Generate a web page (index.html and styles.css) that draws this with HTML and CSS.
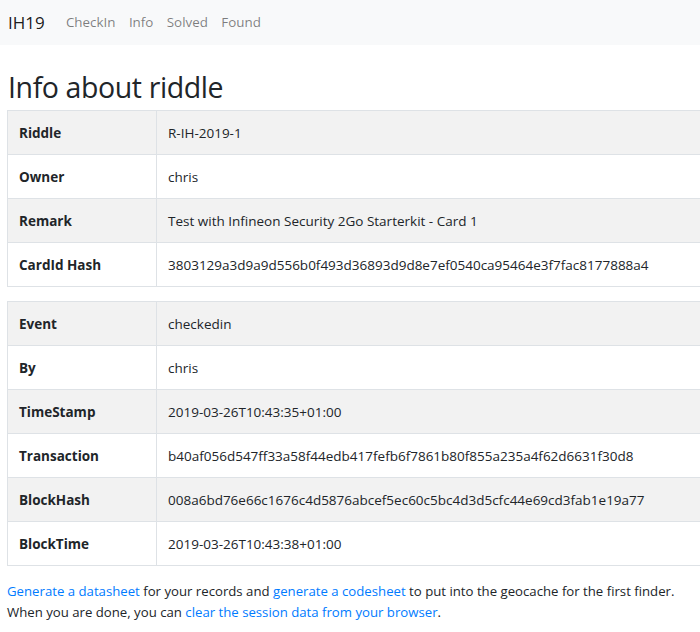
FILE: index.html
```html
<!DOCTYPE html>
<html lang="en">
<head>
<meta charset="utf-8">
<title>Info about riddle</title>
<link rel="stylesheet" href="styles.css">
</head>
<body>
<nav class="navbar">
  <a class="brand" href="#">IH19</a>
  <ul class="nav">
    <li><a href="#">CheckIn</a></li>
    <li><a href="#">Info</a></li>
    <li><a href="#">Solved</a></li>
    <li><a href="#">Found</a></li>
  </ul>
</nav>
<main class="content">
  <h1 class="title">Info about riddle</h1>
  <table class="info">
    <tr><th>Riddle</th><td>R-IH-2019-1</td></tr>
    <tr><th>Owner</th><td>chris</td></tr>
    <tr><th>Remark</th><td>Test with Infineon Security 2Go Starterkit - Card 1</td></tr>
    <tr><th>CardId Hash</th><td>3803129a3d9a9d556b0f493d36893d9d8e7ef0540ca95464e3f7fac8177888a4</td></tr>
  </table>
  <table class="info">
    <tr><th>Event</th><td>checkedin</td></tr>
    <tr><th>By</th><td>chris</td></tr>
    <tr><th>TimeStamp</th><td>2019-03-26T10:43:35+01:00</td></tr>
    <tr><th>Transaction</th><td>b40af056d547ff33a58f44edb417fefb6f7861b80f855a235a4f62d6631f30d8</td></tr>
    <tr><th>BlockHash</th><td>008a6bd76e66c1676c4d5876abcef5ec60c5bc4d3d5cfc44e69cd3fab1e19a77</td></tr>
    <tr><th>BlockTime</th><td>2019-03-26T10:43:38+01:00</td></tr>
  </table>
  <p class="note"><a href="#">Generate a datasheet</a> for your records and <a href="#">generate a codesheet</a> to put into the geocache for the first finder.<br>When you are done, you can <a href="#">clear the session data from your browser</a>.</p>
</main>
</body>
</html>
```

FILE: styles.css
```css
html, body {
  margin: 0;
  padding: 0;
  overflow-x: hidden;
  background: #fff;
}
body {
  font-family: "Open Sans", "Noto Sans", sans-serif;
  font-size: 13.5px;
  color: #212529;
}
a {
  color: #007bff;
  text-decoration: none;
}
.navbar {
  display: flex;
  align-items: center;
  height: 45px;
  padding: 0 8px;
  background: #f8f9fa;
}
.brand {
  color: rgba(0, 0, 0, 0.9);
  font-size: 17px;
  margin-right: 14.5px;
}
.nav {
  display: flex;
  list-style: none;
  margin: 0;
  padding: 0;
}
.nav a {
  display: block;
  padding: 0 6.7px;
  margin-top: -1px;
  color: rgba(0, 0, 0, 0.5);
  font-size: 13.4px;
}
.content {
  width: 760px;
  padding: 0 7px;
}
.title {
  margin: 24px 0 5px 1px;
  font-size: 28.5px;
  letter-spacing: -0.4px;
  font-weight: 400;
  line-height: 36px;
  color: #212529;
}
.info {
  width: 100%;
  border-collapse: collapse;
  margin-bottom: 14px;
}
.info th, .info td {
  height: 43px;
  padding: 0 11px;
  border: 1px solid #dee2e6;
  text-align: left;
  vertical-align: middle;
}
.info th {
  width: 126px;
  font-weight: 700;
}
.info tr:nth-child(odd) {
  background: #f2f2f2;
}
.note {
  margin: 15px 0 0;
  font-size: 13.2px;
  line-height: 21px;
}
```
